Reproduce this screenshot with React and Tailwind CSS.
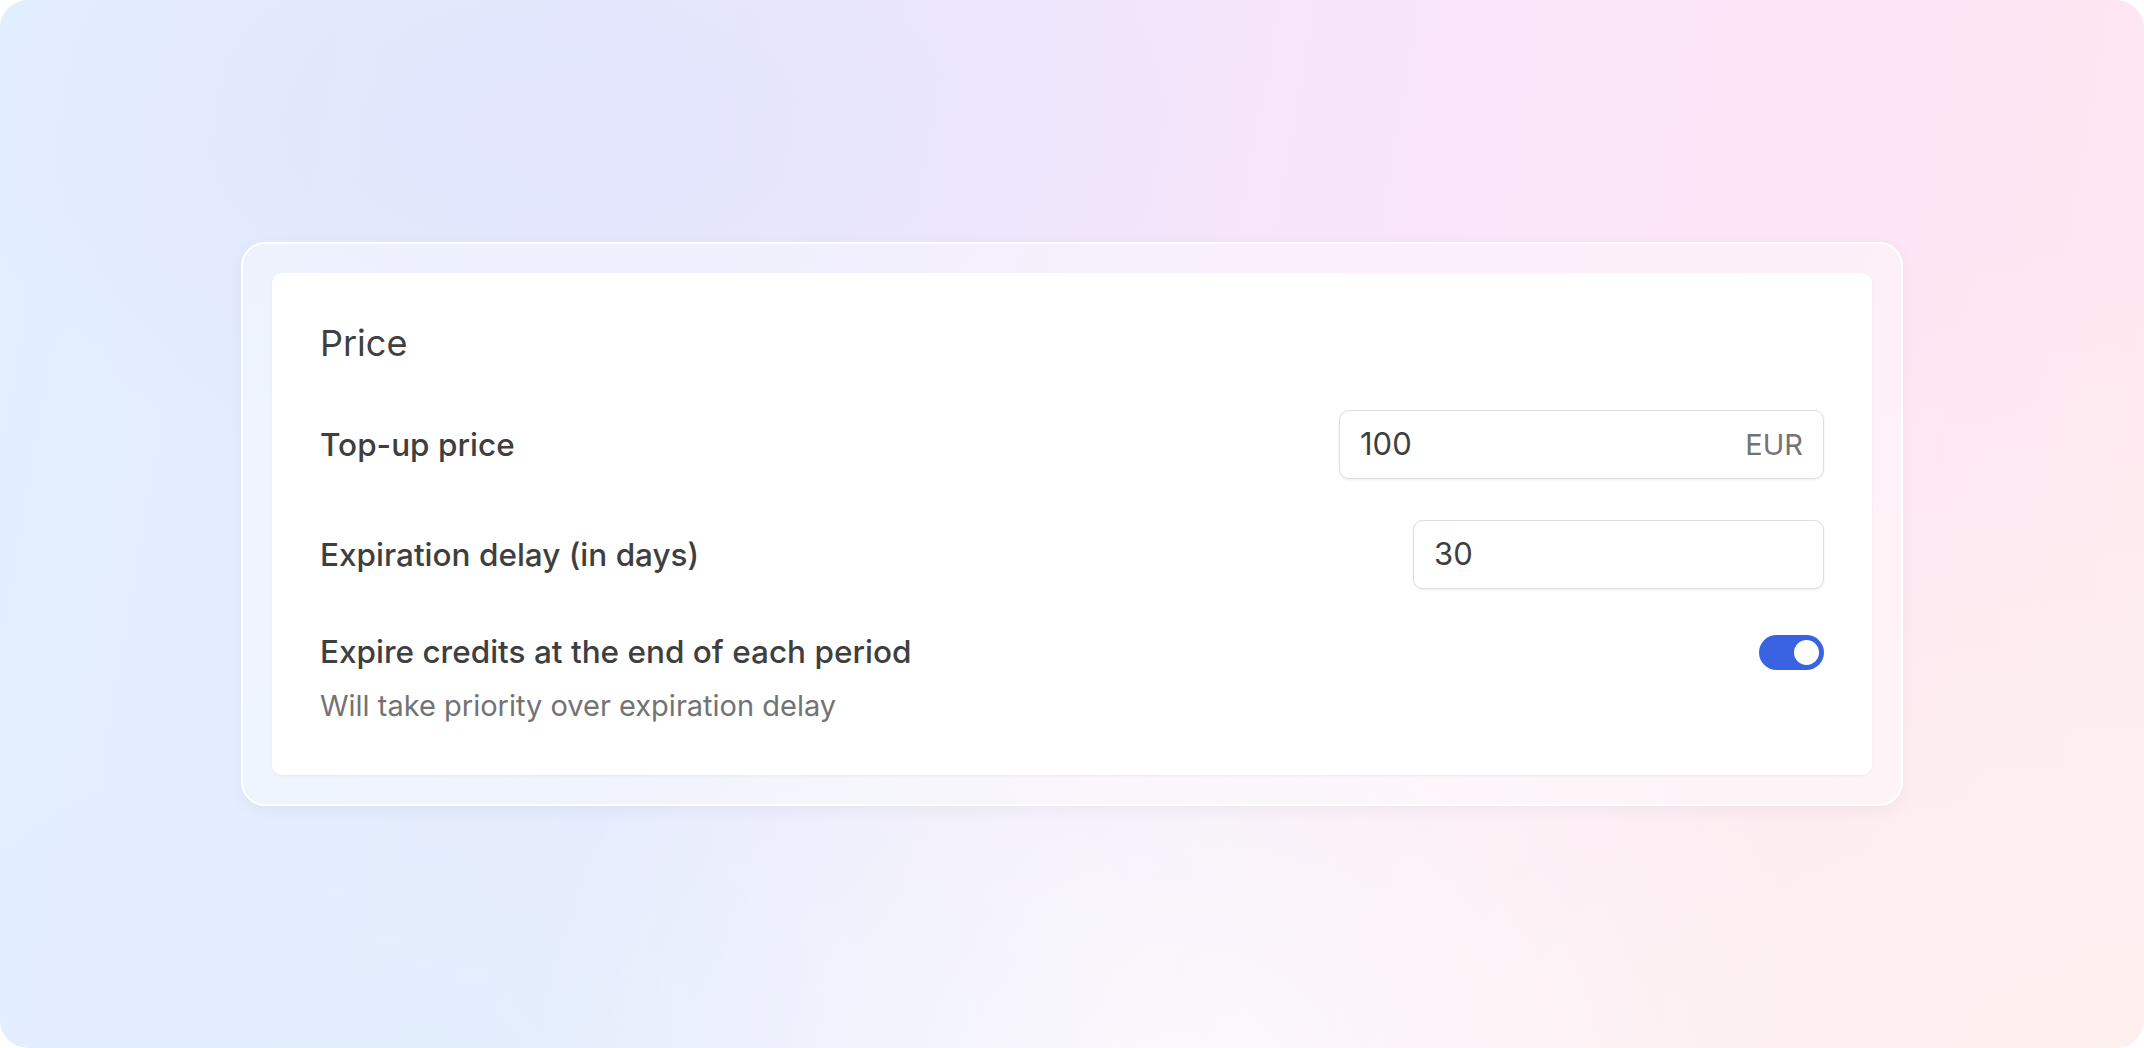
import React, { useState } from "react";

function Toggle({ on, onChange }) {
    return (
        <button
            type="button"
            onClick={() => onChange(!on)}
            className={`w-[65px] h-[35px] rounded-full p-[5px] flex shrink-0 ${on ? "justify-end bg-[#3a63e2]" : "justify-start bg-[#d4d4d8]"}`}
        >
            <span className="block w-[25px] h-[25px] rounded-full bg-white" />
        </button>
    );
}

export default function App() {
    const [price, setPrice] = useState("100");
    const [delay, setDelay] = useState("30");
    const [expire, setExpire] = useState(true);

    return (
        <div className="w-full h-[1048px] bg-white font-['Inter','Noto_Sans',sans-serif]">
            <div className="w-full h-full rounded-[28px] flex items-center justify-center bg-[radial-gradient(ellipse_at_55%_105%,rgba(255,255,255,0.7)_0%,transparent_40%),radial-gradient(ellipse_at_20%_100%,#e3eefd_0%,transparent_45%),radial-gradient(ellipse_at_100%_100%,#fdf1ef_0%,transparent_55%),radial-gradient(ellipse_at_26%_12%,#e2e5fc_0%,transparent_28%),linear-gradient(100deg,#e2effe_0%,#e4ecfd_20%,#eee6fc_40%,#f9e4fa_62%,#fde5f4_85%,#fde9ef_100%)]">
                <div className="w-[1662px] rounded-[24px] border-2 border-white bg-white/40 p-[29px] shadow-[0_4px_14px_rgba(60,60,90,0.05)]">
                    <div className="bg-white rounded-[10px] px-12 pt-12 pb-[51px] shadow-[0_1px_2px_rgba(0,0,0,0.05)]">
                        <h2 className="text-[36px] leading-[44px] font-normal text-[#404040]">Price</h2>

                        <div className="mt-[45px] flex flex-col gap-[41px]">
                            <div className="flex items-center justify-between">
                                <label className="text-[31.5px] font-medium text-[#3f3f3f]">Top-up price</label>
                                <div className="w-[485px] h-[69px] flex items-center rounded-[10px] border border-[#dedede] bg-white px-5 shadow-[0_1px_3px_rgba(0,0,0,0.08)]">
                                    <input
                                        value={price}
                                        onChange={(e) => setPrice(e.target.value)}
                                        className="flex-1 min-w-0 bg-transparent outline-none text-[31px] text-[#3f3f3f]"
                                    />
                                    <span className="text-[29px] text-[#737373]">EUR</span>
                                </div>
                            </div>

                            <div className="flex items-center justify-between">
                                <label className="text-[31.5px] font-medium text-[#3f3f3f]">Expiration delay (in days)</label>
                                <div className="w-[411px] h-[69px] flex items-center rounded-[10px] border border-[#dedede] bg-white px-5 shadow-[0_1px_3px_rgba(0,0,0,0.08)]">
                                    <input
                                        value={delay}
                                        onChange={(e) => setDelay(e.target.value)}
                                        className="flex-1 min-w-0 bg-transparent outline-none text-[31px] text-[#3f3f3f]"
                                    />
                                </div>
                            </div>

                            <div className="flex items-start justify-between">
                                <div>
                                    <div className="text-[31.5px] leading-[44px] font-medium text-[#3f3f3f]">
                                        Expire credits at the end of each period
                                    </div>
                                    <div className="mt-[14px] text-[29px] leading-[36px] text-[#737373]">
                                        Will take priority over expiration delay
                                    </div>
                                </div>
                                <div className="h-[44px] flex items-center">
                                    <Toggle on={expire} onChange={setExpire} />
                                </div>
                            </div>
                        </div>
                    </div>
                </div>
            </div>
        </div>
    );
}
